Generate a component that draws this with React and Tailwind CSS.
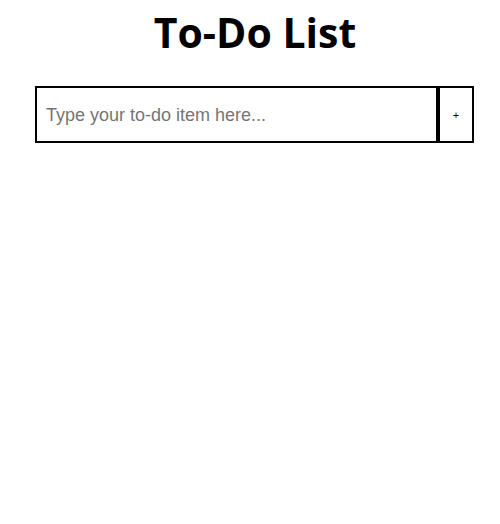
export default function App() {
  return (
    <div className="min-h-[524px] w-[500px] bg-white">
      <h1 className="pt-[4px] pl-[10px] text-center font-['Open_Sans',sans-serif] text-[41px] font-bold leading-[56px] text-black">
        To-Do List
      </h1>
      <form
        className="ml-[35px] mt-[26px] flex h-[57px] w-[439px]"
        onSubmit={(e) => e.preventDefault()}
      >
        <input
          type="text"
          placeholder="Type your to-do item here..."
          className="h-full min-w-0 flex-1 border-2 border-black px-[9px] pt-[2px] font-['Liberation_Sans',Arial,sans-serif] text-[18px] text-black outline-none placeholder:text-[#757575]"
        />
        <button
          type="submit"
          className="h-full w-[36px] border-2 border-black bg-white pt-[1px] font-['Liberation_Sans',Arial,sans-serif] text-[11px] text-black"
        >
          +
        </button>
      </form>
    </div>
  );
}
